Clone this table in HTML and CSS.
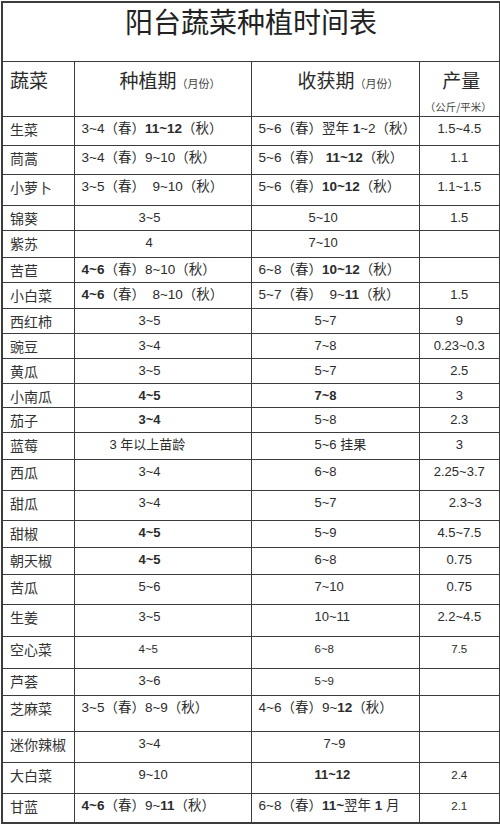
FILE: index.html
```html
<!DOCTYPE html>
<html lang="zh-CN">
<head>
<meta charset="utf-8">
<title>阳台蔬菜种植时间表</title>
<link rel="stylesheet" href="styles.css">
</head>
<body>
<table class="sheet">
  <colgroup>
    <col class="c-name">
    <col class="c-plant">
    <col class="c-harvest">
    <col class="c-yield">
  </colgroup>
  <tr class="title-row"><td colspan="4" class="title">阳台蔬菜种植时间表</td></tr>
  <tr class="head-row">
    <td class="hname">蔬菜</td>
    <td class="hplant">种植期<span class="unit">（月份）</span></td>
    <td class="hharvest">收获期<span class="unit">（月份）</span></td>
    <td class="hyield">产量<div class="unit2">（公斤/平米）</div></td>
  </tr>
  <tr class="r29"><td class="name">生菜</td><td class="two">3~4（春）<b>11~12</b>（秋）</td><td class="two">5~6（春）翌年 <b>1</b>~2（秋）</td><td class="yld">1.5~4.5</td></tr>
  <tr class="r29"><td class="name">茼蒿</td><td class="two">3~4（春）9~10（秋）</td><td class="two">5~6（春） <b>11~12</b>（秋）</td><td class="yld">1.1</td></tr>
  <tr class="r31"><td class="name">小萝卜</td><td class="two">3~5（春）&nbsp; 9~10（秋）</td><td class="two">5~6（春）<b>10~12</b>（秋）</td><td class="yld">1.1~1.5</td></tr>
  <tr class="r25"><td class="name">锦葵</td><td class="one">3~5</td><td class="one2 shift">5~10</td><td class="yld">1.5</td></tr>
  <tr class="r27"><td class="name">紫苏</td><td class="one nudge">4</td><td class="one2 shift">7~10</td><td class="yld"></td></tr>
  <tr class="r25"><td class="name">苦苣</td><td class="two"><b>4~6</b>（春）8~10（秋）</td><td class="two">6~8（春）<b>10~12</b>（秋）</td><td class="yld"></td></tr>
  <tr class="r26"><td class="name">小白菜</td><td class="two"><b>4~6</b>（春）&nbsp; 8~10（秋）</td><td class="two">5~7（春）&nbsp; 9~<b>11</b>（秋）</td><td class="yld">1.5</td></tr>
  <tr class="r25"><td class="name">西红柿</td><td class="one">3~5</td><td class="one2">5~7</td><td class="yld">9</td></tr>
  <tr class="r25"><td class="name">豌豆</td><td class="one">3~4</td><td class="one2">7~8</td><td class="yld">0.23~0.3</td></tr>
  <tr class="r25"><td class="name">黄瓜</td><td class="one">3~5</td><td class="one2">5~7</td><td class="yld">2.5</td></tr>
  <tr class="r24"><td class="name">小南瓜</td><td class="one"><b>4~5</b></td><td class="one2"><b>7~8</b></td><td class="yld">3</td></tr>
  <tr class="r25"><td class="name">茄子</td><td class="one"><b>3~4</b></td><td class="one2">5~8</td><td class="yld">2.3</td></tr>
  <tr class="r27"><td class="name">蓝莓</td><td class="one wide">3 年以上苗龄</td><td class="one2">5~6 挂果</td><td class="yld">3</td></tr>
  <tr class="r31"><td class="name">西瓜</td><td class="one">3~4</td><td class="one2">6~8</td><td class="yld">2.25~3.7</td></tr>
  <tr class="r30"><td class="name">甜瓜</td><td class="one">3~4</td><td class="one2">5~7</td><td class="yld right">2.3~3</td></tr>
  <tr class="r27"><td class="name">甜椒</td><td class="one"><b>4~5</b></td><td class="one2">5~9</td><td class="yld">4.5~7.5</td></tr>
  <tr class="r27"><td class="name">朝天椒</td><td class="one"><b>4~5</b></td><td class="one2">6~8</td><td class="yld">0.75</td></tr>
  <tr class="r30"><td class="name">苦瓜</td><td class="one">5~6</td><td class="one2">7~10</td><td class="yld">0.75</td></tr>
  <tr class="r32"><td class="name">生姜</td><td class="one">3~5</td><td class="one2">10~11</td><td class="yld">2.2~4.5</td></tr>
  <tr class="r32"><td class="name">空心菜</td><td class="one small">4~5</td><td class="one2 small">6~8</td><td class="yld small">7.5</td></tr>
  <tr class="r27"><td class="name">芦荟</td><td class="one">3~6</td><td class="one2 small">5~9</td><td class="yld"></td></tr>
  <tr class="r36"><td class="name">芝麻菜</td><td class="two">3~5（春）8~9（秋）</td><td class="two">4~6（春）9~<b>12</b>（秋）</td><td class="yld"></td></tr>
  <tr class="r31"><td class="name">迷你辣椒</td><td class="one">3~4</td><td class="one2 late">7~9</td><td class="yld"></td></tr>
  <tr class="r31"><td class="name">大白菜</td><td class="one">9~10</td><td class="one2"><b>11~12</b></td><td class="yld small">2.4</td></tr>
  <tr class="r30"><td class="name">甘蓝</td><td class="two"><b>4~6</b>（春）9~<b>11</b>（秋）</td><td class="two">6~8（春）<b>11~</b>翌年 <b>1</b> 月</td><td class="yld small">2.1</td></tr>
</table>
</body>
</html>
```

FILE: styles.css
```css
html, body {
  margin: 0;
  padding: 0;
  background: #ffffff;
}

body {
  font-family: "Liberation Sans", "Noto Sans CJK SC", sans-serif;
  color: #2b2b2b;
}

.sheet {
  margin: 1px 0 0 1px;
  width: 498px;
  border-collapse: collapse;
  table-layout: fixed;
  border: 2px solid #3c3c3c;
}

.c-name { width: 72px; }
.c-plant { width: 177px; }
.c-harvest { width: 168px; }
.c-yield { width: 81px; }

.sheet td {
  border: 1px solid #3c3c3c;
  vertical-align: top;
  padding: 3px 0 0 0;
  font-size: 13px;
  line-height: 18px;
  white-space: nowrap;
  overflow: hidden;
}

.sheet td b {
  font-weight: bold;
}

.title-row { height: 59px; }
.head-row { height: 55px; }
.r24 { height: 24px; }
.r25 { height: 25px; }
.r26 { height: 26px; }
.r27 { height: 27px; }
.r29 { height: 29px; }
.r30 { height: 30px; }
.r31 { height: 31px; }
.r32 { height: 32px; }
.r36 { height: 36px; }

.sheet td.title {
  text-align: center;
  font-family: "Noto Sans CJK SC", sans-serif;
  font-size: 28px;
  line-height: 34px;
  padding-top: 1px;
  color: #222;
  letter-spacing: 0;
}

.sheet .head-row td {
  font-family: "Noto Sans CJK SC", sans-serif;
  font-size: 19px;
  line-height: 24px;
  padding-top: 6px;
  color: #2a2a2a;
}

.sheet td.hname { padding-left: 7px; }
.sheet td.hplant { padding-left: 45px; }
.sheet td.hharvest { padding-left: 46px; }
.sheet td.hyield { text-align: center; padding-left: 4px; }

.unit {
  font-size: 11px;
  color: #444;
}

.unit2 {
  font-size: 10.5px;
  line-height: 12px;
  margin-top: 9px;
  color: #444;
  margin-left: -6px;
}

.sheet td.name {
  font-family: "Noto Sans CJK SC", sans-serif;
  font-size: 14px;
  padding-left: 7px;
  color: #333;
}

.sheet td.two {
  padding-left: 7px;
  font-size: 13.5px;
}

.sheet td.one { padding-left: 64px; }
.sheet td.one.nudge { padding-left: 71px; }
.sheet td.one.wide { padding-left: 35px; font-size: 13px; }
.sheet td.one2 { padding-left: 63px; }
.sheet td.one2.shift { padding-left: 57px; }
.sheet td.one2.late { padding-left: 72px; }

.sheet td.yld {
  text-align: center;
  font-size: 13px;
}

.sheet td.yld.right { padding-left: 12px; }

.sheet td.small { font-size: 11.5px; }
```
